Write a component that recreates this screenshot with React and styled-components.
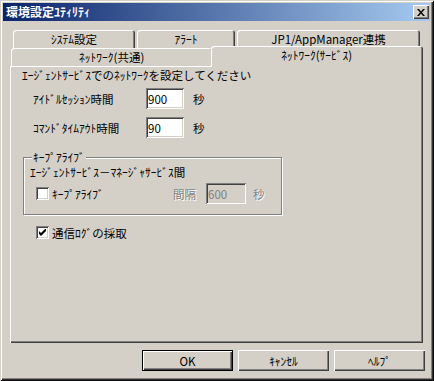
import React from "react"
import styled, { createGlobalStyle } from "styled-components"

const face = "#D4D0C8"
const font = `"Noto Sans CJK JP", "DejaVu Sans", sans-serif`
const size = "11.5px"

const Global = createGlobalStyle`
  html, body {
    margin: 0;
    padding: 0;
    background: ${face};
  }
  body {
    font-family: ${font};
    font-size: ${size};
    color: #000;
  }
`

const backTabs = [
  { label: "ｼｽﾃﾑ設定", w: 122 },
  { label: "ｱﾗｰﾄ", w: 98 },
  { label: "JP1/AppManager連携", w: 183 },
]

export default function App() {
  return (
    <>
      <Global />
      <Window>
        <TitleBar>
          <Title>環境設定ﾕﾃｨﾘﾃｨ</Title>
          <CloseButton aria-label="閉じる">
            <svg width="8" height="7" viewBox="0 0 8 7">
              <path d="M0 0h2l2 2.4L6 0h2L5 3.5 8 7H6L4 4.6 2 7H0l3-3.5z" fill="#000" />
            </svg>
          </CloseButton>
        </TitleBar>

        <Body>
          <TabStrip>
            <TabRow $indent={3}>
              {backTabs.map(t => (
                <Tab key={t.label} $w={t.w}>{t.label}</Tab>
              ))}
            </TabRow>
            <TabRow $indent={1} $gap={0}>
              <Tab $w={202}>ﾈｯﾄﾜｰｸ(共通)</Tab>
              <Tab $w={213} $active>ﾈｯﾄﾜｰｸ(ｻｰﾋﾞｽ)</Tab>
            </TabRow>
          </TabStrip>

          <Panel>
            <Lead>ｴｰｼﾞｪﾝﾄｻｰﾋﾞｽでのﾈｯﾄﾜｰｸを設定してください</Lead>

            <Fields>
              <FieldRow>
                <FieldLabel>ｱｲﾄﾞﾙｾｯｼｮﾝ時間</FieldLabel>
                <TextBox defaultValue="900" $w={38} />
                <Unit $gap={9}>秒</Unit>
              </FieldRow>
              <FieldRow>
                <FieldLabel>ｺﾏﾝﾄﾞﾀｲﾑｱｳﾄ時間</FieldLabel>
                <TextBox defaultValue="90" $w={38} />
                <Unit $gap={9}>秒</Unit>
              </FieldRow>
            </Fields>

            <Group>
              <Legend>ｷｰﾌﾟｱﾗｲﾌﾞ</Legend>
              <GroupText>ｴｰｼﾞｪﾝﾄｻｰﾋﾞｽ－ﾏﾈｰｼﾞｬｻｰﾋﾞｽ間</GroupText>
              <GroupRow>
                <CheckItem $w={137} $indent={6}>
                  <Box />
                  <span>ｷｰﾌﾟｱﾗｲﾌﾞ</span>
                </CheckItem>
                <Unit $disabled>間隔</Unit>
                <TextBox value="600" readOnly disabled $w={40} $gap={10} />
                <Unit $disabled $gap={7}>秒</Unit>
              </GroupRow>
            </Group>

            <LogCheck $indent={14}>
              <Box>
                <svg width="7" height="7" viewBox="0 0 7 7">
                  <path d="M0 2v3l2 2 5-5V-1L2 4z" fill="#000" />
                </svg>
              </Box>
              <span>通信ﾛｸﾞの採取</span>
            </LogCheck>
          </Panel>

          <ButtonRow>
            <PushButton $default>OK</PushButton>
            <PushButton>ｷｬﾝｾﾙ</PushButton>
            <PushButton>ﾍﾙﾌﾟ</PushButton>
          </ButtonRow>
        </Body>
      </Window>
    </>
  )
}

const Window = styled.div`
  box-sizing: border-box;
  width: 434px;
  height: 381px;
  padding: 3px 4px 3px 3px;
  background: ${face};
  box-shadow:
    inset 1px 1px ${face},
    inset -1px -1px #0a0a0a,
    inset 2px 2px #fff,
    inset -2px -2px #303030,
    inset -3px -3px #808080;
  display: flex;
  flex-direction: column;
`

const TitleBar = styled.div`
  height: 18px;
  display: flex;
  align-items: center;
  justify-content: space-between;
  padding: 0 1px 0 3px;
  background: linear-gradient(to right, #0a246a, #a6caf0);
`

const Title = styled.span`
  color: #fff;
  font-weight: bold;
  font-size: 12px;
  line-height: 14px;
`

const CloseButton = styled.button`
  box-sizing: border-box;
  width: 16px;
  height: 14px;
  padding: 0;
  border: none;
  background: ${face};
  display: flex;
  align-items: center;
  justify-content: center;
  box-shadow:
    inset 1px 1px #fff,
    inset -1px -1px #404040,
    inset -2px -2px #808080;
`

const Body = styled.div`
  flex: 1;
  display: flex;
  flex-direction: column;
  padding: 9px 7px 0 7px;
`

const TabStrip = styled.div`
  display: flex;
  flex-direction: column;
`

const TabRow = styled.div`
  display: flex;
  height: 18px;
  gap: ${p => (p.$gap ?? 2)}px;
  padding-left: ${p => p.$indent}px;
`

const Tab = styled.div`
  box-sizing: border-box;
  position: relative;
  z-index: ${p => (p.$active ? 2 : 1)};
  width: ${p => p.$w}px;
  height: ${p => (p.$active ? 21 : 18)}px;
  margin: ${p => (p.$active ? "-2px 0 0 -2px" : "0")};
  padding-bottom: ${p => (p.$active ? 3 : 1)}px;
  background: ${face};
  border-radius: 3px 3px 0 0;
  box-shadow:
    inset 1px 1px #fff,
    inset -1px 0 #404040,
    inset -2px 0 #808080;
  display: flex;
  align-items: center;
  justify-content: center;
  line-height: 14px;
  white-space: nowrap;
`

const Panel = styled.div`
  box-sizing: border-box;
  height: 277px;
  padding: 2px 12px 0 12px;
  background: ${face};
  box-shadow:
    inset 1px 1px #fff,
    inset -1px -1px #404040,
    inset -2px -2px #808080;
  display: flex;
  flex-direction: column;
  align-items: flex-start;
`

const Lead = styled.div`
  line-height: 14px;
  white-space: nowrap;
`

const Fields = styled.div`
  display: flex;
  flex-direction: column;
  gap: 8px;
  margin-top: 6px;
  padding-left: 11px;
`

const FieldRow = styled.div`
  display: flex;
  align-items: center;
  height: 21px;
`

const FieldLabel = styled.span`
  width: 113px;
  line-height: 14px;
  white-space: nowrap;
`

const TextBox = styled.input`
  box-sizing: border-box;
  width: ${p => p.$w}px;
  height: 21px;
  margin: 0 0 0 ${p => p.$gap || 0}px;
  padding: 0 2px;
  border: none;
  outline: none;
  font-family: ${font};
  font-size: ${size};
  color: #000;
  background: #fff;
  box-shadow:
    inset 1px 1px #808080,
    inset -1px -1px #fff,
    inset 2px 2px #404040,
    inset -2px -2px ${face};

  &:disabled {
    background: ${face};
    color: #808080;
  }
`

const Unit = styled.span`
  margin-left: ${p => p.$gap || 0}px;
  line-height: 14px;
  color: ${p => (p.$disabled ? "#808080" : "#000")};
  text-shadow: ${p => (p.$disabled ? "1px 1px 0 #fff" : "none")};
`

const Group = styled.fieldset`
  box-sizing: border-box;
  width: 259px;
  margin: 13px 0 0 1px;
  padding: 1px 6px 10px 6px;
  border: 1px solid #808080;
  box-shadow:
    1px 1px 0 #fff,
    inset 1px 1px 0 #fff;
  min-inline-size: 0;
`

const Legend = styled.legend`
  margin-left: 2px;
  padding: 0 1px;
  line-height: 13px;
  background: ${face};
`

const GroupText = styled.div`
  line-height: 14px;
  white-space: nowrap;
`

const GroupRow = styled.div`
  display: flex;
  align-items: center;
  height: 21px;
  margin-top: 4px;
`

const CheckItem = styled.label`
  display: flex;
  align-items: center;
  gap: 3px;
  width: ${p => (p.$w ? `${p.$w}px` : "auto")};
  margin-left: ${p => p.$indent || 0}px;
  line-height: 14px;
  white-space: nowrap;
`

const LogCheck = styled(CheckItem)`
  height: 13px;
  margin-top: 11px;
`

const Box = styled.span`
  box-sizing: border-box;
  flex: none;
  width: 13px;
  height: 13px;
  background: #fff;
  display: flex;
  align-items: center;
  justify-content: center;
  box-shadow:
    inset 1px 1px #808080,
    inset -1px -1px #fff,
    inset 2px 2px #404040,
    inset -2px -2px ${face};
`

const ButtonRow = styled.div`
  display: flex;
  justify-content: flex-end;
  gap: 5px;
  margin: 7px -2px 0 0;
`

const PushButton = styled.button`
  box-sizing: border-box;
  width: 91px;
  height: 21px;
  padding: 0;
  border: none;
  background: ${face};
  font-family: ${font};
  font-size: ${size};
  color: #000;
  box-shadow: ${p =>
    p.$default
      ? "inset 1px 1px #000, inset -1px -1px #000, inset 2px 2px #fff, inset -2px -2px #404040, inset -3px -3px #808080"
      : "inset 1px 1px #fff, inset -1px -1px #404040, inset -2px -2px #808080"};
`
